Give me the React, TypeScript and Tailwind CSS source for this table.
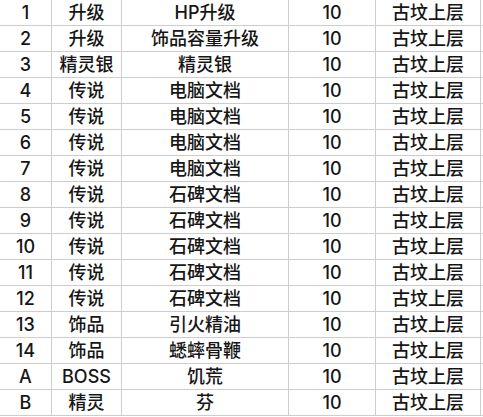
import React from "react";

const rows: [string, string, string][] = [
  ["1", "升级", "HP升级"],
  ["2", "升级", "饰品容量升级"],
  ["3", "精灵银", "精灵银"],
  ["4", "传说", "电脑文档"],
  ["5", "传说", "电脑文档"],
  ["6", "传说", "电脑文档"],
  ["7", "传说", "电脑文档"],
  ["8", "传说", "石碑文档"],
  ["9", "传说", "石碑文档"],
  ["10", "传说", "石碑文档"],
  ["11", "传说", "石碑文档"],
  ["12", "传说", "石碑文档"],
  ["13", "饰品", "引火精油"],
  ["14", "饰品", "蟋蟀骨鞭"],
  ["A", "BOSS", "饥荒"],
  ["B", "精灵", "芬"],
];

export default function App() {
  return (
    <div
      className="w-[483px] h-[417px] bg-white text-[#161616] overflow-hidden"
      style={{ fontFamily: 'Inter, "Noto Sans CJK SC", sans-serif' }}
    >
      {rows.map((r, i) => (
        <div
          key={i}
          className="grid grid-cols-[52px_70px_167px_87px_105px] h-[26px] border-b border-[#cdcdcd] text-[18px] font-medium leading-none"
        >
          <div className="flex items-center justify-center border-r border-[#cdcdcd]">{r[0]}</div>
          <div className="flex items-center justify-center border-r border-[#cdcdcd]">{r[1]}</div>
          <div className="flex items-center justify-center border-r border-[#cdcdcd]">{r[2]}</div>
          <div className="flex items-center justify-center border-r border-[#cdcdcd]">10</div>
          <div className="flex items-center justify-center border-r border-[#cdcdcd]">古坟上层</div>
        </div>
      ))}
    </div>
  );
}
